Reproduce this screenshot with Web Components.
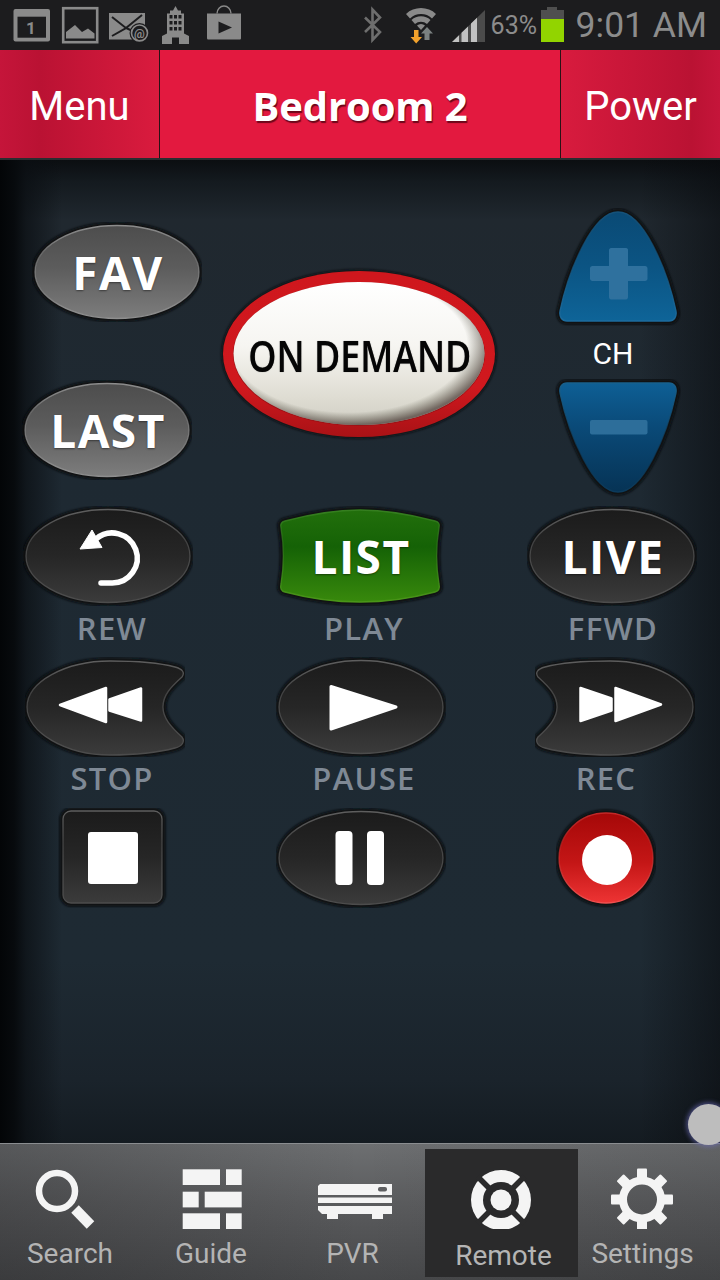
<!DOCTYPE html>
<html><head><meta charset="utf-8"><title>Remote</title>
<style>
html,body{margin:0;padding:0;background:#000}
body{width:720px;height:1280px;overflow:hidden;font-family:Roboto,sans-serif}
</style></head>
<body>
<rc-app></rc-app>
<script>
const REW='M2 47C2 22 40 1 85 1C110 1 135 3 150 7C158 9 160 13 157 17C146 27 138 35 138 47C138 58 146 67 157 77C160 81 158 86 150 88C135 92 110 95 85 95C40 95 2 72 2 47Z';
const DOME='M63 4C88 4 112 60 121 103C122 109 119 113 114 113L12 113C7 113 4 109 5 103C14 60 38 4 63 4Z';
const LIST='M10 15C40 7 65 4 85 4C105 4 130 7 160 15C164 16 165 18 164 22C161 40 161 60 164 78C165 82 164 85 160 86C130 94 105 96 85 96C65 96 40 94 10 86C6 85 5 82 6 78C9 60 9 40 6 22C5 18 6 16 10 15Z';
const SHAPES={
 oval:{w:170,h:100,vb:'0 0 170 100',el:a=>`<ellipse cx="85" cy="50" rx="82" ry="46.5" ${a}/>`},
 rew:{w:160,h:100,vb:'0 -3 160 100',el:a=>`<path d="${REW}" ${a}/>`},
 ff:{w:160,h:100,vb:'0 -3 160 100',el:a=>`<path d="${REW}" transform="matrix(-1 0 0 1 160 0)" ${a}/>`},
 square:{w:110,h:100,vb:'0 0 110 100',el:a=>`<rect x="5" y="3" width="99" height="92" rx="8" ${a}/>`},
 circle:{w:100,h:100,vb:'0 0 100 100',el:a=>`<ellipse cx="50" cy="50" rx="47" ry="45" ${a}/>`},
 list:{w:170,h:100,vb:'0 0 170 100',el:a=>`<path d="${LIST}" ${a}/>`},
 plus:{w:126,h:118,vb:'0 0 126 118',el:a=>`<path d="${DOME}" ${a}/>`},
 minus:{w:126,h:118,vb:'0 0 126 118',el:a=>`<path d="${DOME}" transform="matrix(1 0 0 -1 0 117)" ${a}/>`}
};
const TONES={
 gray:[['#4d4d4d',0],['#5c5c5c',.45],['#7d7d7d',1]],
 dark:[['#1b1b1b',0],['#262626',.5],['#3b3b3b',1]],
 green:[['#226f0c',0],['#156206',.4],['#38890c',1]],
 blue:[['#0a4a75',0],['#0b5483',.5],['#0e6498',1]],
 navy:[['#063355',0],['#0a4a78',.6],['#0e5f95',1]],
 red:[['#a50808',0],['#c41616',.55],['#ee3434',1]]
};
const RIMS={gray:['#8c8c8c','#8e8e8e'],dark:['#5e5e5e','#4c4c4c'],green:['#357f1f','#4a9618'],blue:['#15527a','#1d6c9e'],navy:['#0c3b5c','#18608c'],red:['#c42828','#f25050']};

class RcKey extends HTMLElement{
 connectedCallback(){
  if(this.shadowRoot)return;
  const s=SHAPES[this.getAttribute('shape')||'oval'],t=this.getAttribute('tone')||'dark';
  const stops=TONES[t].map(([c,o])=>`<stop offset="${o}" stop-color="${c}"/>`).join('');
  const [r1,r2]=RIMS[t];
  const r=this.attachShadow({mode:'open'});
  r.innerHTML=`<style>
  :host{display:grid;place-items:center;position:relative;width:${s.w}px;height:${s.h}px;color:#fff;
   font:700 46px/1 "Open Sans",sans-serif;letter-spacing:1.500px;text-indent:2px;text-shadow:0 1px 2px rgba(0,0,0,.45)}
  svg{position:absolute;inset:0}
  .c{position:relative;display:grid;place-items:center;width:100%;height:100%}
  </style>
  <svg width="${s.w}" height="${s.h}" viewBox="${s.vb}">
   <defs><linearGradient id="f" x1="0" y1="0" x2="0" y2="1">${stops}</linearGradient>
   <linearGradient id="m" x1="0" y1="0" x2="0" y2="1"><stop offset="0" stop-color="${r1}"/><stop offset=".35" stop-color="${r1}" stop-opacity=".6"/><stop offset="1" stop-color="${r2}"/></linearGradient>
   <filter id="b" x="-10%" y="-10%" width="120%" height="120%"><feGaussianBlur stdDeviation="1.300"/></filter></defs>
   ${s.el('fill="#07090c" stroke="#07090c" stroke-width="7" opacity=".85" filter="url(#b)"')}
   ${s.el('fill="url(#f)"')}
   ${s.el('fill="none" stroke="url(#m)" stroke-width="1.300"')}
  </svg><div class="c"><slot></slot></div>`;
 }
}
customElements.define('rc-key',RcKey);

class RcDemand extends HTMLElement{
 connectedCallback(){
  if(this.shadowRoot)return;
  this.attachShadow({mode:'open'}).innerHTML=`<style>
  :host{display:grid;place-items:center;position:relative;width:280px;height:176px}
  svg{position:absolute;inset:0}
  span{position:relative;display:inline-block;color:#050505;font:600 44px/1 "Open Sans",sans-serif;white-space:nowrap;transform:scaleX(.815);margin:0 0 0 1px;text-shadow:0 0 1px rgba(0,0,0,.6)}
  </style>
  <svg width="280" height="176" viewBox="0 0 280 176"><defs>
   <linearGradient id="r" x1="0" y1="0" x2="0" y2="1"><stop offset="0" stop-color="#cf171d"/><stop offset=".7" stop-color="#d0181e"/><stop offset="1" stop-color="#a91216"/></linearGradient>
   <linearGradient id="w" x1="0" y1="0" x2="0" y2="1"><stop offset="0" stop-color="#fff"/><stop offset=".45" stop-color="#f6f5f1"/><stop offset=".8" stop-color="#dfddd3"/><stop offset="1" stop-color="#cfcdc3"/></linearGradient>
   <radialGradient id="e" cx=".46" cy=".44" r=".56"><stop offset=".84" stop-color="#443" stop-opacity="0"/><stop offset="1" stop-color="#3a2a25" stop-opacity=".65"/></radialGradient>
   <filter id="b" x="-10%" y="-10%" width="120%" height="120%"><feGaussianBlur stdDeviation="1.200"/></filter></defs>
   <ellipse cx="140" cy="87" rx="138" ry="85" fill="#080b0e" opacity=".7" filter="url(#b)"/>
   <ellipse cx="140" cy="87" rx="136" ry="83" fill="url(#r)"/>
   <ellipse cx="140" cy="87" rx="126" ry="72" fill="#9c1216"/>
   <ellipse cx="140" cy="86.500" rx="125.500" ry="71.500" fill="url(#w)"/>
   <ellipse cx="140" cy="86.500" rx="125.500" ry="71.500" fill="url(#e)"/>
  </svg><span><slot></slot></span>`;
 }
}
customElements.define('rc-demand',RcDemand);

class RcLabel extends HTMLElement{
 connectedCallback(){
  if(this.shadowRoot)return;
  this.attachShadow({mode:'open'}).innerHTML=`<style>
  :host{display:block;text-align:center;color:#7f8995;font:600 31px/1 "Open Sans",sans-serif;letter-spacing:1.300px;white-space:nowrap}
  </style><slot></slot>`;
 }
}
customElements.define('rc-label',RcLabel);

class RcStatus extends HTMLElement{
 connectedCallback(){
  if(this.shadowRoot)return;
  const g='#8a8a8a';
  this.attachShadow({mode:'open'}).innerHTML=`<style>
  :host{display:flex;align-items:flex-start;height:50px;background:#1c1c1e;color:#8c8c8c;font-family:Roboto,sans-serif;flex:none}
  svg{display:block;flex:none}
  .pct{font-size:25px;line-height:24px;margin:14px 0 0 2px;width:48px;white-space:nowrap}
  .time{font-size:35.500px;line-height:36px;margin:7px 0 0 7px;white-space:nowrap}
  .sp{flex:1}
  </style>
  <svg width="250" height="50" viewBox="0 0 250 50">
   <rect x="13.500" y="9" width="36.500" height="32.500" rx="2" fill="${g}"/><rect x="17.500" y="16.700" width="28.500" height="21" fill="#1c1c1e"/>
   <text x="31" y="33.500" text-anchor="middle" fill="${g}" font-family="Roboto,sans-serif" font-weight="700" font-size="17">1</text>
   <rect x="63.200" y="8.200" width="34" height="34" fill="none" stroke="${g}" stroke-width="2.600"/>
   <path d="M66 38.500V32L75 25L82 32L88 28.500L94.500 33.500V38.500Z" fill="${g}"/>
   <rect x="109" y="13" width="36" height="26.500" fill="${g}"/>
   <path d="M112 17L126 28L112 36M142 15L126 28L137 33" fill="none" stroke="#1c1c1e" stroke-width="2"/>
   <circle cx="139.500" cy="33" r="10" fill="#1c1c1e"/><circle cx="139.500" cy="33" r="8" fill="none" stroke="${g}" stroke-width="1.600"/>
   <text x="139.500" y="37.500" text-anchor="middle" fill="${g}" font-family="Roboto,sans-serif" font-weight="700" font-size="12">@</text>
   <path d="M175.500 6L178 10.500H181V13.500H184V33.500L189 36V44H179V37.500H172V44H162V36L167 33.500V13.500H170V10.500H173Z" fill="${g}"/>
   <g fill="#1c1c1e"><rect x="169.500" y="15" width="3" height="3.500"/><rect x="174" y="15" width="3" height="3.500"/><rect x="178.500" y="15" width="3" height="3.500"/><rect x="169.500" y="21" width="3" height="3.500"/><rect x="174" y="21" width="3" height="3.500"/><rect x="178.500" y="21" width="3" height="3.500"/><rect x="169.500" y="27" width="3" height="3.500"/><rect x="174" y="27" width="3" height="3.500"/><rect x="178.500" y="27" width="3" height="3.500"/></g>
   <path d="M217 13.500A7 7.500 0 0 1 231 13.500" fill="none" stroke="${g}" stroke-width="1.400"/>
   <path d="M207 13.500H241V38C241 39 240.500 39.500 239.500 39.500H208.500C207.500 39.500 207 39 207 38Z" fill="${g}"/>
   <path d="M218.500 21.500V33.500L232 27.500Z" fill="#1c1c1e"/>
  </svg>
  <div class="sp"></div>
  <svg width="128" height="50" viewBox="362 0 128 50">
   <path d="M366 17.500L381 32L373.500 40V9.500L381 17.500L366 32" fill="none" stroke="#6e6e6e" stroke-width="2.600"/>
   <path d="M407 14A22 22 0 0 1 437 14L433 18.500A16 16 0 0 0 411 18.500Z" fill="${g}"/>
   <path d="M412.500 20A14 14 0 0 1 431.500 20L428 24A9 9 0 0 0 416 24Z" fill="${g}"/>
   <path d="M418 25.500A6 6 0 0 1 426 25.500L422 30Z" fill="${g}"/>
   <path d="M428 27L434 33.500H430.500V40H425.500V33.500H422Z" fill="#7a8080"/>
   <path d="M415 30H419.500V37H423L417.200 43.500L411.500 37H415Z" fill="#f2a12c"/>
   <path d="M453 42L486 10V42Z" fill="#4b4b4b"/>
   <path d="M453 42L460 35.200V42ZM462.500 32.800L469 26.500V42H462.500ZM472 23.600L478 17.800V42H472Z" fill="#c2c2c2"/>
  </svg>
  <span class="pct">63%</span>
  <svg width="30" height="50" viewBox="540 0 30 50">
   <rect x="548" y="7" width="10" height="4" fill="#4f4f4f"/><rect x="542" y="10" width="23" height="32" fill="#4f4f4f"/>
   <rect x="542" y="19" width="23" height="23" fill="#92d400"/>
  </svg>
  <span class="time">9:01 AM</span><div style="width:13px;flex:none"></div>`;
 }
}
customElements.define('rc-status',RcStatus);

class RcHeader extends HTMLElement{
 connectedCallback(){
  if(this.shadowRoot)return;
  this.attachShadow({mode:'open'}).innerHTML=`<style>
  :host{display:grid;grid-template-columns:159px 1px 400px 1px 159px;height:108px;border-bottom:2px solid #2a2d30;flex:none;color:#fff;font:400 40px/1 Roboto,sans-serif}
  div{display:grid;place-items:center;padding-top:6px;box-sizing:border-box}
  .l{background:linear-gradient(90deg,#c5153a 0,#ba1233 25%,#da1b3e 100%)}
  .r{background:linear-gradient(270deg,#c5153a 0,#ba1233 18%,#d81b3e 100%)}
  .t{background:#e3193f;font:700 40px/1 "Open Sans",sans-serif;letter-spacing:-.1px;padding-top:4px;text-shadow:1px 2px 1px rgba(70,0,15,.75)}
  .d{background:#2a1216;padding:0}
  </style>
  <div class="l">Menu</div><div class="d"></div><div class="t">Bedroom 2</div><div class="d"></div><div class="r">Power</div>`;
 }
}
customElements.define('rc-header',RcHeader);

class RcRemote extends HTMLElement{
 connectedCallback(){
  if(this.shadowRoot)return;
  this.attachShadow({mode:'open'}).innerHTML=`<style>
  :host{display:block;flex:1;min-height:0;position:relative;
   background:
    linear-gradient(90deg,#030507 0,#070a0d 14px,rgba(10,14,18,.7) 26px,rgba(10,14,18,0) 62px,rgba(0,0,0,0) 640px,rgba(8,10,13,.55) 720px),
    linear-gradient(180deg,#0b0e11 0,#141a1f 22px,#20282f 60px,rgba(30,41,50,1) 300px,#1e2a33 800px,#1a232b 920px,#141b21 983px);
  }
  .top{display:grid;grid-template-columns:219px 280px 221px;height:346px}
  .lc{display:flex;flex-direction:column;padding-top:62px;gap:58px;align-items:flex-start}
  .lc>:first-child{margin-left:32px}.lc>:last-child{margin-left:22px}
  .dm{margin-top:107px}
  .rc{display:flex;flex-direction:column;margin-top:48px;padding-left:56px}
  .ch{height:53px;text-align:center;width:116px;color:#fff;font:400 30px/56px Roboto,sans-serif}
  .tp{display:grid;grid-template-columns:224px 280px 216px;grid-template-rows:100px 51px 100px 51px 100px}
  .tp rc-key{justify-self:start}
  .tp rc-label{line-height:44px}
  .tp .s2{line-height:42px}
  svg{display:block}
  </style>
  <div class="top">
   <div class="lc"><rc-key shape="oval" tone="gray">FAV</rc-key><rc-key shape="oval" tone="gray">LAST</rc-key></div>
   <div class="dm"><rc-demand>ON DEMAND</rc-demand></div>
   <div class="rc">
    <rc-key shape="plus" tone="blue"><svg width="126" height="118" viewBox="555 208 126 118"><path d="M611 248H626C627.500 248 628 249 628 250V266H645C646.500 266 647.500 267 647.500 268.500V278.500C647.500 280 646.500 281 645 281H628V297C628 298.500 627 299.500 626 299.500H611C610 299.500 609 298.500 609 297V281H592.500C591 281 590 280 590 278.500V268.500C590 267 591 266 592.500 266H609V250C609 249 610 248 611 248Z" fill="#2f719e"/></svg></rc-key>
    <div class="ch">CH</div>
    <rc-key shape="minus" tone="navy"><svg width="126" height="118" viewBox="555 379 126 118"><rect x="590" y="420" width="57.500" height="14.500" rx="2" fill="#2d6e9a"/></svg></rc-key>
   </div>
  </div>
  <div class="tp">
   <rc-key shape="oval" style="margin-left:23px"><svg width="170" height="100" viewBox="23 506 170 100"><path d="M96 539A25 25 0 1 1 112 583H101" fill="none" stroke="#fff" stroke-width="5.500" stroke-linecap="round"/><path d="M80 549L92 530L102 547.500Z" fill="#fff" stroke="#fff" stroke-width="1" stroke-linejoin="round"/></svg></rc-key>
   <rc-key shape="list" tone="green" style="margin-left:51px">LIST</rc-key>
   <rc-key shape="oval" style="margin-left:23px">LIVE</rc-key>
   <rc-label class="s1">REW</rc-label><rc-label class="s1">PLAY</rc-label><rc-label class="s1" style="margin-left:2px">FFWD</rc-label>
   <rc-key shape="rew" style="margin-left:25px"><svg width="160" height="100" viewBox="25 657 160 100"><path d="M60 705L106 688V722ZM109.500 699.500L141 688.500V720.500L109.500 710.500Z" fill="#fff" stroke="#fff" stroke-width="2.500" stroke-linejoin="round"/></svg></rc-key>
   <rc-key shape="oval" style="margin-left:52px"><svg width="170" height="100" viewBox="276 657 170 100"><path d="M331 686.500L396 707L331 729Z" fill="#fff" stroke="#fff" stroke-width="3" stroke-linejoin="round"/></svg></rc-key>
   <rc-key shape="ff" style="margin-left:31px"><svg width="160" height="100" viewBox="535 657 160 100"><path d="M580.500 688V721L611.500 710.500V698.500ZM615.500 688V721L661 704.500Z" fill="#fff" stroke="#fff" stroke-width="2.500" stroke-linejoin="round"/></svg></rc-key>
   <rc-label class="s2">STOP</rc-label><rc-label class="s2">PAUSE</rc-label><rc-label class="s2" style="margin-right:12px">REC</rc-label>
   <rc-key shape="square" style="margin-left:58px"><svg width="110" height="100" viewBox="58 808 110 100"><rect x="88" y="832" width="50" height="52" rx="3" fill="#fff"/></svg></rc-key>
   <rc-key shape="oval" style="margin-left:52px"><svg width="170" height="100" viewBox="276 808 170 100"><rect x="335.500" y="831" width="17" height="54" rx="4" fill="#fff"/><rect x="367" y="831" width="17" height="54" rx="4" fill="#fff"/></svg></rc-key>
   <rc-key shape="circle" tone="red" style="margin-left:52px"><svg width="100" height="100" viewBox="556 808 100 100"><circle cx="607" cy="860" r="25" fill="#fff"/></svg></rc-key>
  </div>`;
 }
}
customElements.define('rc-remote',RcRemote);

class RcNavItem extends HTMLElement{
 connectedCallback(){
  if(this.shadowRoot)return;
  const on=this.hasAttribute('active');
  this.attachShadow({mode:'open'}).innerHTML=`<style>
  :host{display:block;box-sizing:border-box;height:128px;color:#b4b4b4;font:400 28px/1 Roboto,sans-serif;text-align:center;${on?'background:#2a2a2b;':''}}
  .l{height:48px;line-height:${on?'54px':'50px'};display:block;white-space:nowrap;${on?'padding-left:4px;':''}}
  ::slotted(svg){display:block}
  </style><slot name="icon"></slot><span class="l"><slot></slot></span>`;
 }
}
customElements.define('rc-nav-item',RcNavItem);

class RcNav extends HTMLElement{
 connectedCallback(){
  if(this.shadowRoot)return;
  let teeth='';for(let i=0;i<8;i++)teeth+=`<rect x="637" y="1168.500" width="10" height="12" rx="1" transform="rotate(${i*45} 642 1199.500)"/>`;
  this.attachShadow({mode:'open'}).innerHTML=`<style>
  :host{display:grid;grid-template-columns:140px 142px 143px 153px 142px;height:137px;box-sizing:border-box;flex:none;padding-top:5px;
   border-top:1px solid #8a8d90;
   background:linear-gradient(90deg,rgba(20,20,22,.25) 0,rgba(0,0,0,0) 50%,rgba(20,20,22,.12) 100%),linear-gradient(180deg,#6d6f71 0,#5a5b5d 45%,#47484a 100%)}
  </style>
  <rc-nav-item>Search<svg slot="icon" width="140" height="80" viewBox="0 1149 140 80"><circle cx="57" cy="1191" r="18" fill="none" stroke="#f4f4f4" stroke-width="6.500"/><path d="M75 1209L90.500 1225" stroke="#f4f4f4" stroke-width="10.500"/></svg></rc-nav-item>
  <rc-nav-item>Guide<svg slot="icon" width="142" height="80" viewBox="140 1149 142 80"><g fill="#f4f4f4"><rect x="182.700" y="1169.300" width="37.300" height="15.700"/><rect x="226" y="1169.300" width="15.700" height="15.700"/><rect x="182.700" y="1191.700" width="16" height="15.700"/><rect x="204.700" y="1191.700" width="37" height="15.700"/><rect x="182.700" y="1213.300" width="37.300" height="16"/><rect x="226" y="1213.300" width="15.700" height="16"/></g></svg></rc-nav-item>
  <rc-nav-item style="text-indent:-2px">PVR<svg slot="icon" width="143" height="80" viewBox="282 1149 143 80"><g fill="#f4f4f4"><path d="M320 1184H392V1195H318V1186Z"/><rect x="318" y="1197.500" width="74" height="5.500"/><path d="M318 1206H392V1214H383V1219H372V1214H338V1219H327V1214H322L318 1210Z"/></g><rect x="378" y="1187" width="9" height="4.500" rx="2" fill="#5f6062"/></svg></rc-nav-item>
  <rc-nav-item active>Remote<svg slot="icon" width="153" height="80" viewBox="425 1149 153 80"><circle cx="501" cy="1200" r="30" fill="#f4f4f4"/><g stroke="#2a2a2b" stroke-width="5.500"><path d="M477.500 1176.500L524.500 1223.500M524.500 1176.500L477.500 1223.500"/></g><circle cx="501" cy="1200" r="18" fill="#2a2a2b"/><circle cx="501" cy="1200" r="10.500" fill="#f4f4f4"/></svg></rc-nav-item>
  <rc-nav-item style="padding-right:13px">Settings<svg slot="icon" width="142" height="80" viewBox="578 1149 142 80" style="margin-right:-13px"><g fill="#f4f4f4">${teeth}</g><circle cx="642" cy="1199.500" r="19" fill="none" stroke="#f4f4f4" stroke-width="8"/></svg></rc-nav-item>`;
 }
}
customElements.define('rc-nav',RcNav);

class RcApp extends HTMLElement{
 connectedCallback(){
  if(this.shadowRoot)return;
  this.attachShadow({mode:'open'}).innerHTML=`<style>
  :host{display:flex;flex-direction:column;width:720px;height:1280px;position:relative;overflow:hidden}
  .dot{position:absolute;left:688px;top:1104px;width:41px;height:41px;border-radius:50%;background:#bdbdbd;box-shadow:0 0 4px 2px rgba(110,110,190,.55)}
  </style>
  <rc-status></rc-status><rc-header></rc-header><rc-remote></rc-remote><rc-nav></rc-nav><div class="dot"></div>`;
 }
}
customElements.define('rc-app',RcApp);
</script>
</body></html>
